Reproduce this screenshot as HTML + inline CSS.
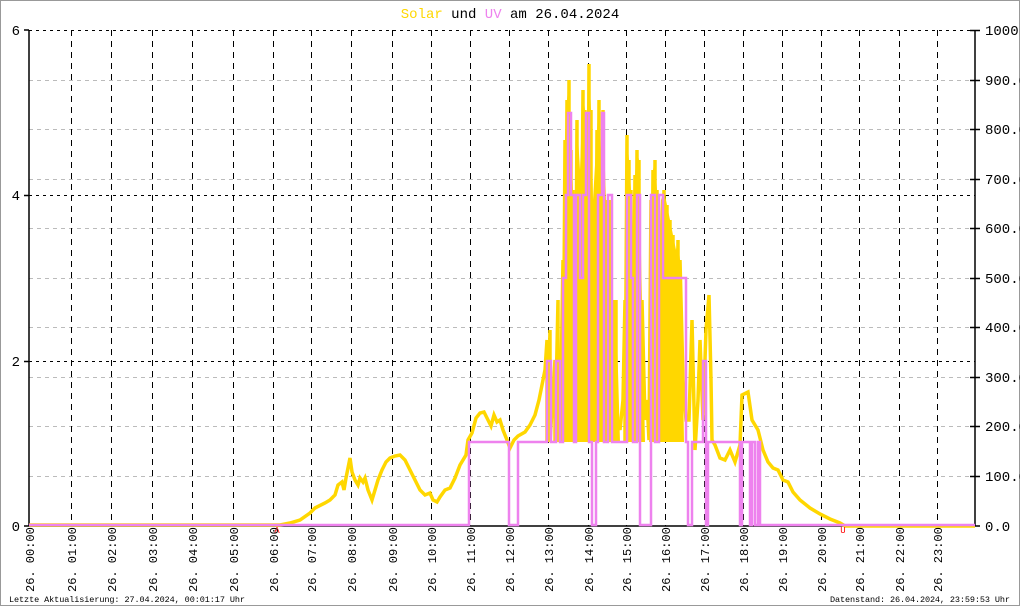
<!DOCTYPE html>
<html><head><meta charset="utf-8"><style>
html,body{margin:0;padding:0;background:#fff}
svg{display:block}
text{font-family:"Liberation Mono","DejaVu Sans Mono",monospace;}
</style></head><body>
<svg width="1020" height="606" viewBox="0 0 1020 606" xmlns="http://www.w3.org/2000/svg">
<rect x="0.5" y="0.5" width="1019" height="605" fill="#fff" stroke="#999"/>
<text x="510" y="18" font-size="14" text-anchor="middle"><tspan fill="#ffd700">Solar</tspan><tspan fill="#000"> und </tspan><tspan fill="#ee82ee">UV</tspan><tspan fill="#000"> am 26.04.2024</tspan></text>
<g stroke="#bbb" stroke-dasharray="4,4" stroke-width="1">
<path d="M29 80.5H975M29 129.5H975M29 179.5H975M29 228.5H975M29 278.5H975M29 327.5H975M29 377.5H975M29 426.5H975M29 476.5H975"/>
</g>
<g stroke="#000" stroke-dasharray="3,4" stroke-width="1">
<path d="M29 30.5H975M29 195.5H975M29 361.5H975"/>
</g>
<g stroke="#000" stroke-dasharray="6,5" stroke-width="1">
<path d="M71.5 30V526M111.5 30V526M152.5 30V526M192.5 30V526M233.5 30V526M273.5 30V526M311.5 30V526M351.5 30V526M392.5 30V526M431.5 30V526M470.5 30V526M509.5 30V526M548.5 30V526M588.5 30V526M626.5 30V526M665.5 30V526M704.5 30V526M743.5 30V526M782.5 30V526M821.5 30V526M859.5 30V526M899.5 30V526M937.5 30V526"/>
</g>
<g stroke="#000" stroke-width="1.5">
<path d="M29 30V526M975 30V526M29 526H975"/>
<path d="M24 30H29M24 195.5H29M24 361.5H29M24 526H29"/>
<path d="M970 30.5H980M970 80.5H980M970 129.5H980M970 179.5H980M970 228.5H980M970 278.5H980M970 327.5H980M970 377.5H980M970 426.5H980M970 476.5H980M970 526H980"/>
</g>
<g font-size="14" fill="#000">
<text x="20" y="35" text-anchor="end">6</text>
<text x="20" y="200" text-anchor="end">4</text>
<text x="20" y="366" text-anchor="end">2</text>
<text x="20" y="531" text-anchor="end">0</text>
<text x="985" y="35">1000</text>
<text x="985" y="85">900.0</text>
<text x="985" y="134">800.0</text>
<text x="985" y="184">700.0</text>
<text x="985" y="233">600.0</text>
<text x="985" y="283">500.0</text>
<text x="985" y="332">400.0</text>
<text x="985" y="382">300.0</text>
<text x="985" y="431">200.0</text>
<text x="985" y="481">100.0</text>
<text x="985" y="531">0.0</text>
</g>
<polygon fill="#ffd700" points="563,442 563,260 565,140 567,100 569,80 571,150 573,190 575,200 577,120 580,170 583,90 585,110 587,120 589,64 591,110 593,200 597,130 599,100 601,150 603,110 606,200 610,200 612,300 616,300 620,442"/>
<polygon fill="#ffd700" points="625,442 625,300 627,135 629,160 631,190 633,250 635,175 637,150 639,160 642,300 645,442"/>
<polygon fill="#ffd700" points="649,442 651,200 653,170 655,160 657,190 659,250 661,200 664,190 667,205 670,220 673,235 676,250 678,240 680,260 683,380 684,442"/>
<polyline fill="none" stroke="#ffd700" stroke-width="3.5" stroke-linejoin="miter" points="29,525 280,525 290,523 300,520 310,513 315,508 325,503 330,500 335,495 338,485 342,482 344,490 346,478 348,468 350,458 352,472 355,480 358,485 360,478 363,482 365,478 368,490 372,500 375,490 378,480 382,470 386,462 390,458 395,456 400,455 405,460 410,470 415,480 420,490 425,495 430,493 433,500 437,502 440,497 445,490 450,488 455,478 460,465 466,455 468,440 472,433 476,418 480,413 484,412 488,420 491,426 494,415 497,422 500,420 503,430 507,440 510,448 514,440 518,436 525,432 530,425 535,415 539,400 542,385 545,370 547,340 547,442 550,330 550,442 555,360 555,442 558,300 558,442 560,410 560,442 563,260 563,442 565,140 565,442 567,100 567,442 569,80 569,442 571,150 571,442 573,190 573,442 575,360 575,442 577,120 577,442 580,170 580,442 583,90 583,442 585,110 585,442 587,120 587,442 589,64 589,442 591,110 591,442 593,400 593,442 595,360 595,442 597,130 597,442 599,100 599,442 601,150 601,442 603,110 603,442 606,380 606,442 608,420 608,442 610,200 610,442 612,350 612,442 614,430 614,442 616,300 616,442 618,420 620,430 623,400 625,300 625,442 627,135 627,442 629,160 629,442 631,190 631,442 633,380 635,175 635,442 637,150 637,442 639,160 639,442 642,300 645,420 647,400 649,440 651,200 651,442 653,170 653,442 655,160 655,442 657,190 657,442 659,380 661,300 661,442 664,190 664,442 667,205 667,442 670,220 670,442 673,235 673,442 676,250 676,442 678,240 678,442 680,260 683,380 686,420 689,420 692,320 695,450 698,400 700,340 703,420 706,330 709,295 711,380 712,440 715,445 720,458 725,460 730,450 735,462 740,445 742,395 748,392 752,420 758,430 763,450 768,462 773,468 778,470 783,480 788,482 793,492 800,500 810,508 820,514 830,519 840,523 845,526 975,526"/>
<polyline fill="none" stroke="#ee82ee" stroke-width="2.5" points="29,525 469,525 469,442 509,442 509,525 518,525 518,442 547,442 547,361 551,361 551,442 556,442 556,361 560,361 560,442 563,442 563,278 566,278 566,195 568,195 568,113 571,113 571,195 574,195 574,442 576,442 576,195 580,195 580,278 583,278 583,195 586,195 586,113 589,113 589,442 592,442 592,525 596,525 596,442 598,442 598,195 602,195 602,113 604,113 604,442 608,442 608,195 612,195 612,442 627,442 627,195 631,195 631,278 633,278 633,442 637,442 637,195 640,195 640,525 651,525 651,195 655,195 655,442 659,442 659,195 663,195 663,278 686,278 686,442 688,442 688,525 692,525 692,442 703,442 703,361 706,361 706,525 708,525 708,442 740,442 740,525 742,525 742,442 750,442 750,525 752,525 752,442 755,442 755,525 758,525 758,442 760,442 760,525 975,525"/>
<text x="277" y="533" font-size="9" fill="red" text-anchor="middle">A</text>
<text x="843" y="533" font-size="9" fill="red" text-anchor="middle">U</text>
<g font-size="12" fill="#000">
<text transform="translate(34,592) rotate(-90)">26. 00:00</text>
<text transform="translate(76,592) rotate(-90)">26. 01:00</text>
<text transform="translate(116,592) rotate(-90)">26. 02:00</text>
<text transform="translate(157,592) rotate(-90)">26. 03:00</text>
<text transform="translate(197,592) rotate(-90)">26. 04:00</text>
<text transform="translate(238,592) rotate(-90)">26. 05:00</text>
<text transform="translate(278,592) rotate(-90)">26. 06:00</text>
<text transform="translate(316,592) rotate(-90)">26. 07:00</text>
<text transform="translate(356,592) rotate(-90)">26. 08:00</text>
<text transform="translate(397,592) rotate(-90)">26. 09:00</text>
<text transform="translate(436,592) rotate(-90)">26. 10:00</text>
<text transform="translate(475,592) rotate(-90)">26. 11:00</text>
<text transform="translate(514,592) rotate(-90)">26. 12:00</text>
<text transform="translate(553,592) rotate(-90)">26. 13:00</text>
<text transform="translate(593,592) rotate(-90)">26. 14:00</text>
<text transform="translate(631,592) rotate(-90)">26. 15:00</text>
<text transform="translate(670,592) rotate(-90)">26. 16:00</text>
<text transform="translate(709,592) rotate(-90)">26. 17:00</text>
<text transform="translate(748,592) rotate(-90)">26. 18:00</text>
<text transform="translate(787,592) rotate(-90)">26. 19:00</text>
<text transform="translate(826,592) rotate(-90)">26. 20:00</text>
<text transform="translate(864,592) rotate(-90)">26. 21:00</text>
<text transform="translate(904,592) rotate(-90)">26. 22:00</text>
<text transform="translate(942,592) rotate(-90)">26. 23:00</text>
</g>
<text x="9" y="602" font-size="8.5" textLength="236">Letzte Aktualisierung: 27.04.2024, 00:01:17 Uhr</text>
<text x="830" y="602" font-size="8.5" textLength="180">Datenstand: 26.04.2024, 23:59:53 Uhr</text>
</svg>
</body></html>
